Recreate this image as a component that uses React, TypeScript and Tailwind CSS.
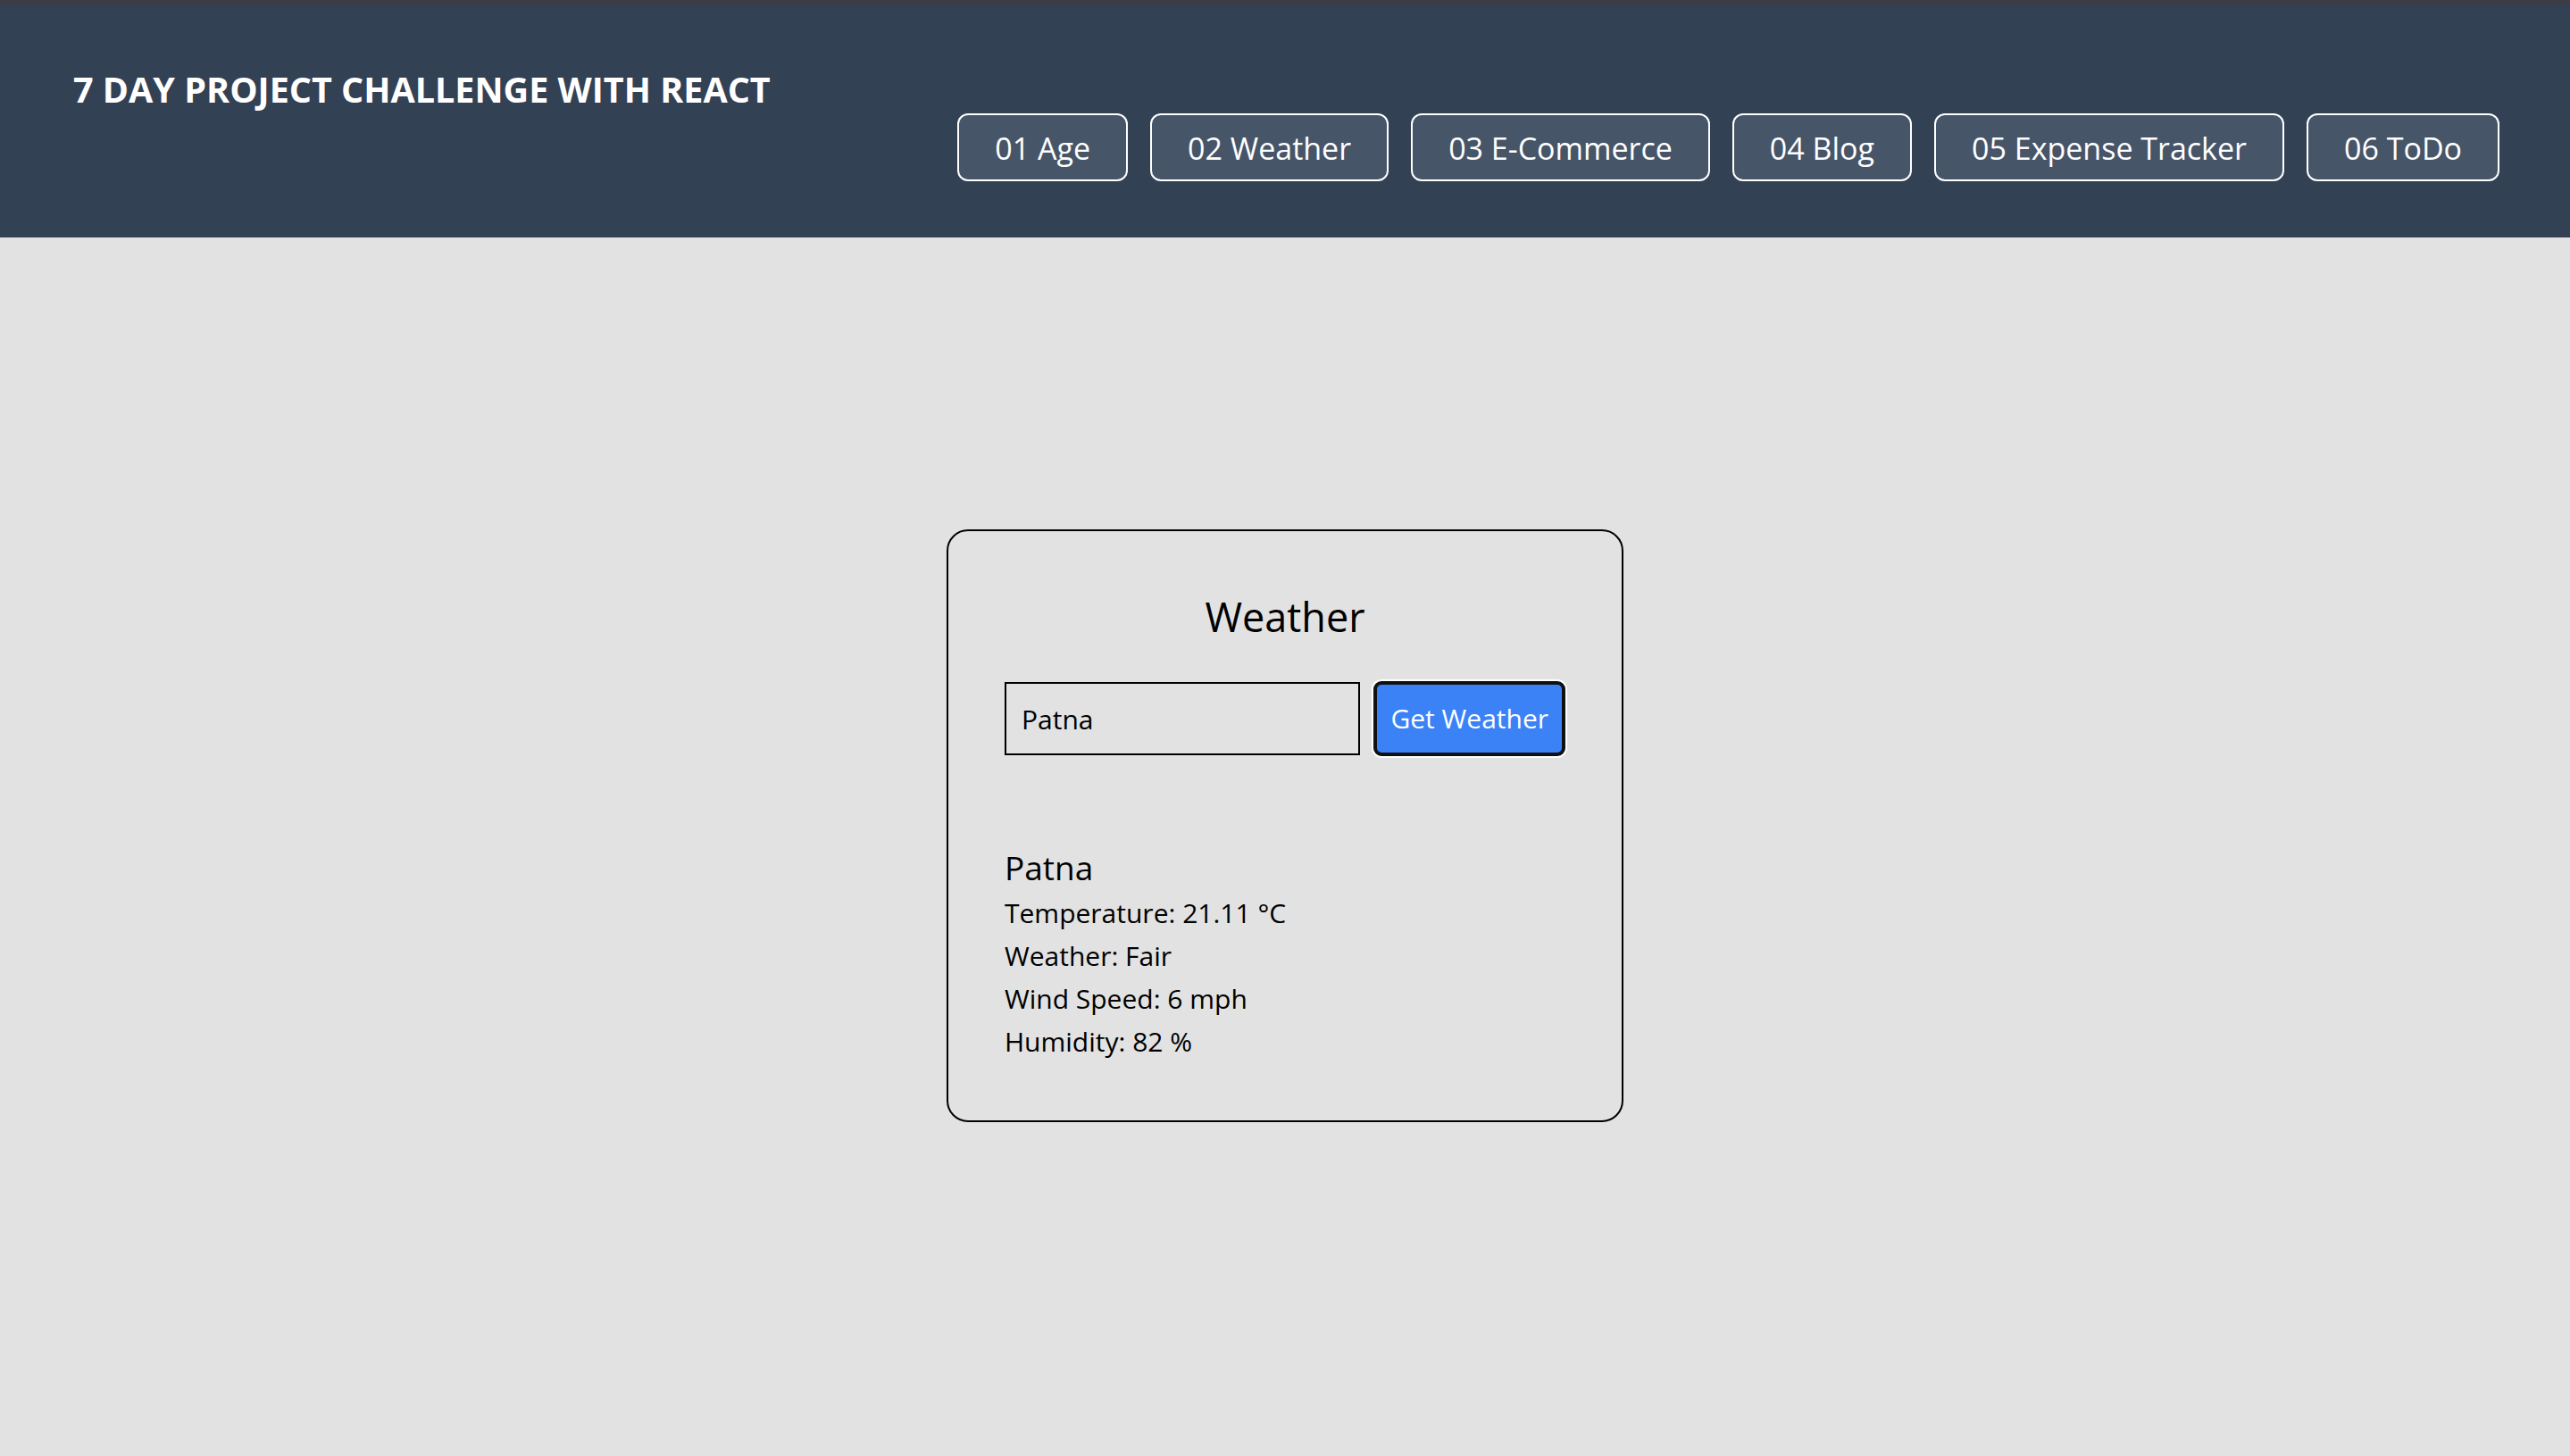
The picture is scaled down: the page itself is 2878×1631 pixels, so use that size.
import { useState } from "react";

const links = ["01 Age", "02 Weather", "03 E-Commerce", "04 Blog", "05 Expense Tracker", "06 ToDo"];

const font = { fontFamily: '"Open Sans", "Noto Sans", sans-serif' };

function Header() {
  return (
    <header className="h-[260px] bg-[#334155] pl-[82px] pr-[79px] flex justify-between items-start">
      <h1 className="pt-[66px] text-[39.5px] leading-[56px] font-bold text-white">7 DAY PROJECT CHALLENGE WITH REACT</h1>
      <nav className="pt-[121px] flex gap-[25px]">
        {links.map((l) => (
          <button
            key={l}
            className="h-[76px] px-[40px] pt-[2px] flex items-center border-2 border-white rounded-[12px] bg-[#475569] text-white text-[34px] leading-none"
          >
            {l}
          </button>
        ))}
      </nav>
    </header>
  );
}

function WeatherCard() {
  const [city, setCity] = useState("Patna");

  return (
    <div className="w-[758px] mx-auto border-2 border-black rounded-[24px] px-[63px] pt-[64px] pb-[64px]">
      <h2 className="text-center text-[45px] leading-[64px] text-black">Weather</h2>
      <div className="mt-[40px] flex items-center gap-[15px]">
        <input
          value={city}
          onChange={(e) => setCity(e.target.value)}
          className="flex-1 min-w-0 h-[82px] border-2 border-black bg-transparent pl-[17px] text-[30px] text-black outline-none"
          style={font}
        />
        <button className="h-[84px] px-[15px] border-4 border-[#111] rounded-[9px] bg-[#3b82f6] text-white text-[30px] leading-none shadow-[0_0_0_2px_#ffffff]">
          Get Weather
        </button>
      </div>
      <div className="mt-[98px] text-black">
        <h3 className="text-[37px] leading-[54px]">Patna</h3>
        <p className="text-[30px] leading-[48px]">Temperature: 21.11 °C</p>
        <p className="text-[30px] leading-[48px]">Weather: Fair</p>
        <p className="text-[30px] leading-[48px]">Wind Speed: 6 mph</p>
        <p className="text-[30px] leading-[48px]">Humidity: 82 %</p>
      </div>
    </div>
  );
}

export default function App() {
  return (
    <div className="min-h-screen bg-[#e2e2e2]" style={font}>
      <div className="h-[6px] bg-[#3a3d46]" />
      <Header />
      <main className="pt-[327px] pb-[100px]">
        <WeatherCard />
      </main>
    </div>
  );
}
